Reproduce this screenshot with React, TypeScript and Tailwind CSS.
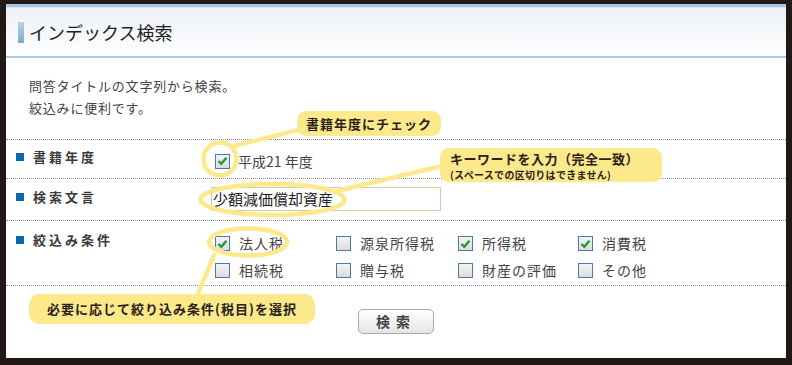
import React from "react";

const FONT = { fontFamily: '"Noto Sans CJK JP", "Noto Sans", sans-serif' };

function Box({ checked }: { checked?: boolean }) {
  return (
    <span className="relative inline-flex h-[15px] w-[15px] shrink-0 items-center justify-center border border-[#4d79a3] bg-gradient-to-b from-[#f4f4f4] to-[#dcdcdc]">
      {checked && (
        <svg width="11" height="10" viewBox="0 0 11 10">
          <path d="M1.5 5 L4.3 7.8 L9.5 1.8" fill="none" stroke="#1f9a33" strokeWidth="2.4" />
        </svg>
      )}
    </span>
  );
}

function Label({ text }: { text: string }) {
  return (
    <div className="flex w-[195px] shrink-0 items-center gap-[9px]">
      <span className="h-[8px] w-[8px] bg-[#0b6aab]" />
      <span className="text-[13px] font-bold tracking-[3px] text-[#3a3a3a]">{text}</span>
    </div>
  );
}

function Item({ label, checked }: { label: string; checked?: boolean }) {
  return (
    <div className="flex h-[23px] items-center gap-[9px]">
      <Box checked={checked} />
      <span className="text-[14px] tracking-[1px] text-[#444]">{label}</span>
    </div>
  );
}

const Dots = () => <div className="border-t border-dotted border-[#8f8f8f]" />;

export default function App() {
  const Y = "#fce98c";
  return (
    <div className="h-[365px] w-[792px] bg-[#231815] pl-[6px] pr-[6px] pt-[4px] pb-[7px]" style={FONT}>
      <div className="relative h-[354px] w-[780px] bg-white">
        {/* header */}
        <div className="border-t-[3px] border-[#a8c9e4] bg-[#ffffff]">
          <div className="flex h-[51px] items-center border-b-[2px] border-t border-b-[#a7cbe6] border-t-[#d6e6f3] bg-gradient-to-b from-[#eef2f6] to-[#fdfeff] pl-[12px]">
            <span className="h-[21px] w-[6px] bg-gradient-to-b from-[#b9d3e8] to-[#7ea9cb]" />
            <span className="ml-[5px] text-[18px] leading-none text-[#222]">インデックス検索</span>
          </div>
        </div>

        {/* description */}
        <div className="pl-[23px] pt-[17px] text-[13px] leading-[22px] tracking-[0.8px] text-[#444]">
          <div>問答タイトルの文字列から検索。</div>
          <div>絞込みに便利です。</div>
        </div>

        <div className="mt-[20px]">
          <Dots />
          {/* row 1 */}
          <div className="flex h-[38px] pl-[10px]">
            <div className="pt-[7px]">
              <Label text="書籍年度" />
            </div>
            <div className="flex items-center gap-[8px] pl-[4px] pt-[4px]">
              <Box checked />
              <span className="text-[14px] text-[#444]">平成21 年度</span>
            </div>
          </div>
          <Dots />
          {/* row 2 */}
          <div className="flex h-[41px] pl-[10px]">
            <div className="pt-[8px]">
              <Label text="検索文言" />
            </div>
            <div className="pt-[8px]">
              <div className="flex h-[24px] w-[230px] items-center border border-[#c4d2ad] pl-[1px] text-[15px] text-[#222]">
                少額減価償却資産
              </div>
            </div>
          </div>
          <Dots />
          {/* row 3 */}
          <div className="flex h-[64px] pl-[10px]">
            <div className="pt-[9px]">
              <Label text="絞込み条件" />
            </div>
            <div className="grid grid-cols-[121px_122px_120px_120px] pl-[4px] pt-[11px]">
              <Item label="法人税" checked />
              <Item label="源泉所得税" />
              <Item label="所得税" checked />
              <Item label="消費税" checked />
              <Item label="相続税" />
              <Item label="贈与税" />
              <Item label="財産の評価" />
              <Item label="その他" />
            </div>
          </div>
          <Dots />
          <div className="flex justify-center pt-[23px]">
            <button className="h-[25px] w-[76px] rounded-[5px] border border-[#a9a9a9] bg-gradient-to-b from-[#ffffff] to-[#e4e4e4] text-[14px] font-bold tracking-[6px] text-[#444]">
              検索
            </button>
          </div>
        </div>

        {/* annotations */}
        <svg className="pointer-events-none absolute left-0 top-0" width="780" height="354">
          <line x1="296" y1="125" x2="224" y2="143" stroke={Y} strokeWidth="4.5" />
          <line x1="440" y1="161" x2="331" y2="187" stroke={Y} strokeWidth="4.5" />
          <line x1="191" y1="292" x2="209" y2="249" stroke={Y} strokeWidth="4.5" />
          <circle cx="214" cy="155" r="16.5" fill="none" stroke={Y} strokeWidth="4.5" />
          <ellipse cx="266.5" cy="195.5" rx="72" ry="15.5" fill="none" stroke={Y} strokeWidth="4.5" />
          <ellipse cx="242" cy="238" rx="39" ry="13.5" fill="none" stroke={Y} strokeWidth="4.5" />
        </svg>

        <div className="absolute left-[291px] top-[107px] flex h-[25px] w-[144px] items-center justify-center rounded-[9px] bg-[#fce98c] text-[13px] font-bold tracking-[1px] text-[#2a2118]">
          書籍年度にチェック
        </div>
        <div className="absolute left-[434px] top-[144px] flex h-[34px] w-[222px] flex-col justify-center rounded-[9px] bg-[#fce98c] pl-[10px] pt-[2px] text-[#2a2118]">
          <div className="text-[13px] font-bold leading-[18px] tracking-[0.5px]">キーワードを入力（完全一致）</div>
          <div className="text-[10px] font-bold leading-[14px] tracking-[0.3px]">(スペースでの区切りはできません)</div>
        </div>
        <div className="absolute left-[23px] top-[290px] flex h-[30px] w-[286px] items-center justify-center rounded-[10px] bg-[#fce98c] text-[13px] font-bold tracking-[1px] text-[#2a2118]">
          必要に応じて絞り込み条件(税目)を選択
        </div>
      </div>
    </div>
  );
}
